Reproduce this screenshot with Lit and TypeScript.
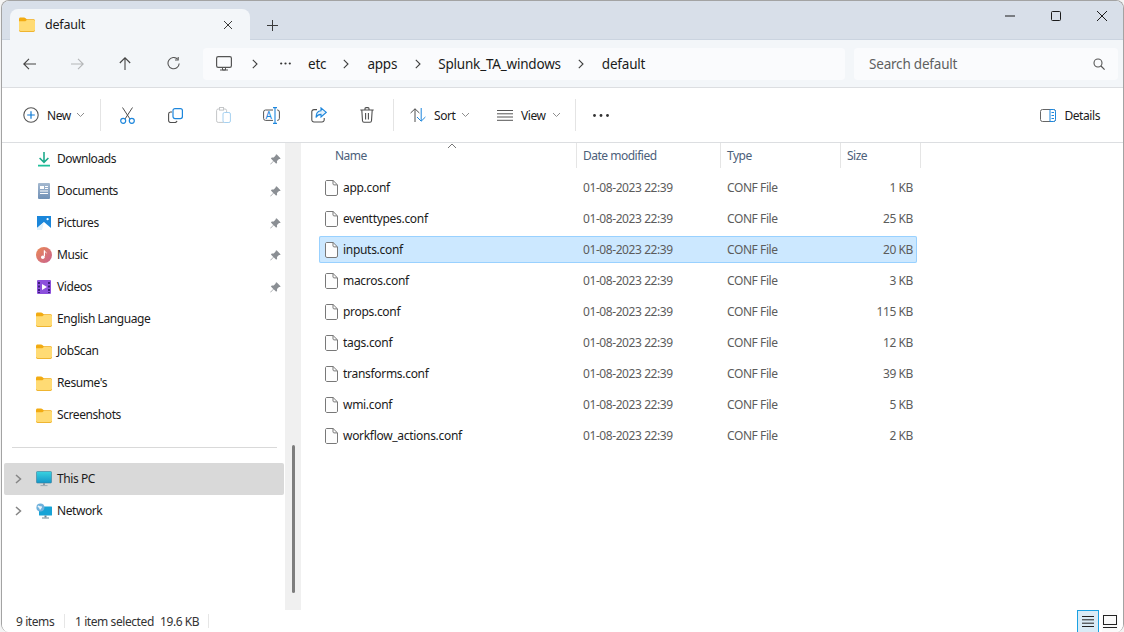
import { LitElement, html, css, svg } from "lit";
import { customElement } from "lit/decorators.js";

const folder = (w = 16, h = 15) => html`<svg class="ic" width=${w} height=${h} viewBox="0 0 16 15">
  <path d="M0 2.2C0 1.2.6.5 1.5.5h3.6c.5 0 .9.2 1.2.5L7.8 2.3H14.5c.9 0 1.5.6 1.5 1.5V6H0z" fill="#f2ab12"/>
  <path d="M0 4.2h6.4l1.4-1.2h6.7c.9 0 1.5.6 1.5 1.4v8.9c0 .9-.6 1.4-1.5 1.4h-13C.6 14.7 0 14.2 0 13.3z" fill="#ffdb74"/>
  <path d="M0 13.3c0 .9.6 1.4 1.5 1.4h13c.9 0 1.5-.5 1.5-1.4v-.5c0 .7-.6 1.2-1.5 1.2h-13C.6 14 0 13.5 0 12.8z" fill="#eaa50f"/>
</svg>`;

const doc = html`<svg class="ic" width="13" height="16" viewBox="0 0 13 16">
  <path d="M1.5.5h6.6l4.4 4.4v9.1c0 .8-.6 1.5-1.4 1.5H1.9c-.8 0-1.4-.7-1.4-1.5V2C.5 1.2.8.5 1.5.5z" fill="#fdfdfd" stroke="#787878"/>
  <path d="M8 .5v3.4c0 .6.5 1 1 1h3.5" fill="none" stroke="#787878"/>
</svg>`;

const pin = html`<svg class="ic" width="11" height="11" viewBox="0 0 11 11">
  <path d="M6.6.3l4.1 4.1-1 .7-.7-.2-2 2 .1 1.9-.9.9-2.5-2.5L.6 10.4l-.3-.3L3.3 6.9.9 4.4l.9-.9 1.9.1 2-2-.2-.7z" fill="#8b8f94"/>
</svg>`;

const chevSmall = html`<svg class="ic" width="9" height="6" viewBox="0 0 9 6"><path d="M1 1l3.5 3.5L8 1" fill="none" stroke="#8e8e8e" stroke-width="1"/></svg>`;
const crumbChev = html`<svg class="ic" width="6" height="10" viewBox="0 0 6 10"><path d="M.8.8L5 5 .8 9.2" fill="none" stroke="#3f3f3f" stroke-width="1.1"/></svg>`;
const treeChev = html`<svg class="ic" width="7" height="10" viewBox="0 0 7 10"><path d="M1 1l4.5 4L1 9" fill="none" stroke="#858585" stroke-width="1.5"/></svg>`;

const sideIcons: Record<string, unknown> = {
  Downloads: html`<svg class="ic" width="16" height="16" viewBox="0 0 16 16"><path d="M8 1v10M3.6 7l4.4 4.4L12.4 7" fill="none" stroke="#1dab8c" stroke-width="1.6"/><path d="M2 14.6h12" stroke="#1fc09a" stroke-width="1.6"/></svg>`,
  Documents: html`<svg class="ic" width="16" height="16" viewBox="0 0 16 16"><defs><linearGradient id="dg" x1="0" y1="0" x2="0" y2="1"><stop offset="0" stop-color="#a5b9d0"/><stop offset="1" stop-color="#6f90b6"/></linearGradient></defs><rect x="2" y="0" width="12" height="16" rx="1" fill="url(#dg)"/><path d="M4 3h4v3H4zM9 3h3v1H9zM9 5h3v1H9zM4 7.5h8v1H4zM4 10h8v1H4z" fill="#fff"/></svg>`,
  Pictures: html`<svg class="ic" width="16" height="16" viewBox="0 0 16 16"><rect x="1" y="1" width="14" height="14" fill="#1a86da"/><path d="M1 13l7-6 7 6v2H1z" fill="#fff"/><path d="M1 13l7-6-2 8H1z" fill="#dff0fb"/><circle cx="11.6" cy="4.2" r="1.1" fill="#fff"/></svg>`,
  Music: html`<svg class="ic" width="16" height="16" viewBox="0 0 16 16"><defs><linearGradient id="mg" x1="0" y1="0" x2="1" y2="1"><stop offset="0" stop-color="#ea8a55"/><stop offset="1" stop-color="#c9618f"/></linearGradient></defs><circle cx="8" cy="8" r="8" fill="url(#mg)"/><path d="M8.4 3.6v6" stroke="#fff" stroke-width="1.2"/><path d="M8.4 3.6c.4 1.4 1.6 1.6 2.2 2.4" stroke="#fff" fill="none"/><circle cx="6.8" cy="10.2" r="1.8" fill="#fff"/></svg>`,
  Videos: html`<svg class="ic" width="16" height="16" viewBox="0 0 16 16"><rect x="1" y="1" width="14" height="14" rx="1" fill="#8c50dc"/><path d="M6 5l5 3-5 3z" fill="#fff"/><path d="M2 3h2v2H2zM2 6.5h2v2H2zM2 10h2v2H2zM2 13h2v1H2zM12 3h2v2h-2zM12 6.5h2v2h-2zM12 10h2v2h-2zM12 13h2v1h-2z" fill="#3b1e78"/></svg>`,
  "This PC": html`<svg class="ic" width="16" height="16" viewBox="0 0 16 16"><defs><linearGradient id="pg" x1="0" y1="0" x2="0" y2="1"><stop offset="0" stop-color="#38d3e0"/><stop offset="1" stop-color="#1596c8"/></linearGradient></defs><rect x=".5" y=".5" width="15" height="11.5" rx=".8" fill="url(#pg)" stroke="#3b7f9c" stroke-width=".6"/><path d="M7 12h2v2H7z" fill="#8a9aa6"/><path d="M4.5 14.6h7" stroke="#9aa8b2" stroke-width="1"/></svg>`,
  Network: html`<svg class="ic" width="16" height="16" viewBox="0 0 16 16"><rect x="3" y="3.5" width="13" height="9" rx=".6" fill="#17a3d6"/><path d="M8.5 12.5h2v2h-2z" fill="#6f8592"/><path d="M6 15h7" stroke="#6f8592"/><circle cx="4.4" cy="4.4" r="4" fill="#6fb1dc"/><path d="M2 2.4c1.4.3 2 1 3 .8s1.4.8.6 1.8-1 2-1.8 1.6-.2-1.6-1-2-1.6-.8-.8-2.2z" fill="#eaf4fa"/></svg>`,
};

const win = [
  ["Downloads", true], ["Documents", true], ["Pictures", true], ["Music", true], ["Videos", true],
  ["English Language", false], ["JobScan", false], ["Resume's", false], ["Screenshots", false],
] as [string, boolean][];

const files = [
  ["app.conf", "1 KB"], ["eventtypes.conf", "25 KB"], ["inputs.conf", "20 KB"], ["macros.conf", "3 KB"],
  ["props.conf", "115 KB"], ["tags.conf", "12 KB"], ["transforms.conf", "39 KB"], ["wmi.conf", "5 KB"],
  ["workflow_actions.conf", "2 KB"],
];

const stroke = (d: string, c = "#4a4a4a", w = 1.2) => svg`<path d=${d} fill="none" stroke=${c} stroke-width=${w}/>`;

@customElement("app-root")
export class AppRoot extends LitElement {
  static styles = css`
    :host { display: block; width: 1124px; height: 632px; background: #f4f4f4; padding-left: 1px; box-sizing: border-box; overflow: hidden;
      font-family: "Noto Sans", "Open Sans", sans-serif; font-size: 12px; color: #1b1b1b; letter-spacing: -0.42px; }
    * { box-sizing: border-box; }
    .ic { display: block; flex: none; }
    .window { width: 1123px; height: 632px; border: 1px solid #a3a3a3; border-width: 1px 1px 0 1px; border-radius: 8px 8px 8px 8px; overflow: hidden; display: flex; flex-direction: column; background: #fff; }

    .title { height: 39px; flex: none; background: #d8dfe9; display: flex; align-items: flex-end; padding-left: 8px; border-bottom: 1px solid #cbd4e0; }
    .tab { width: 240px; height: 31px; margin-bottom: -1px; background: #f3f6f9; border-radius: 8px 8px 0 0; display: flex; align-items: center; padding: 0 17px 0 9px; }
    .tab-label { margin-left: 10px; flex: 1; font-size: 12.5px; padding-bottom: 1px; letter-spacing: -0.2px; }
    .new-tab { margin: 0 0 8px 17px; }
    .winbtns { margin-left: auto; margin-right: -2px; align-self: flex-start; display: flex; height: 30px; align-items: center; }
    .wb { width: 46px; display: flex; justify-content: center; }

    .nav { flex: none; background: #f3f6f9; border-bottom: 1px solid #dcdee1; display: flex; align-items: center; padding-left: 3px; padding-right: 4px; height: 48px; }
    .navbtn { width: 48px; display: flex; justify-content: center; }
    .addr { margin-left: 6px; width: 642px; height: 32px; background: #fafbfd; border-radius: 4px; display: flex; align-items: center; padding-left: 13px; font-size: 13.5px; letter-spacing: -0.2px; }
    .addr .c1 { margin-left: 20px; }
    .addr .dots { margin-left: 22px; }
    .addr .t1 { margin-left: 17px; }
    .addr .c2 { margin-left: 17px; }
    .addr .t2 { margin-left: 18px; }
    .addr .c2b { margin-left: 18px; }
    .addr .t3 { margin-left: 17px; }
    .addr .c3 { margin-left: 17px; }
    .addr .t4 { margin-left: 18px; }
    .search { margin-left: 9px; width: 264px; height: 32px; background: #fafbfd; border-radius: 4px; display: flex; align-items: center; justify-content: space-between; padding: 0 13px 0 15px; color: #5f5f5f; font-size: 13.5px; letter-spacing: -0.2px; }

    .toolbar { height: 55px; flex: none; border-bottom: 1px solid #dcdee1; display: flex; align-items: center; padding-left: 11px; background: #fff; }
    .sep { width: 1px; height: 32px; background: #e4e4e4; flex: none; }
    .ib { width: 48px; display: flex; justify-content: center; flex: none; }
    .ib.first { margin-left: 2px; }
    .sep.s2 { margin-left: 2px; }
    .sep.s3 { margin-left: 14px; }
    .tb { display: flex; align-items: center; flex: none; }
    .new { width: 87px; padding-left: 10px; }
    .new span { margin: 0 6px 0 8px; width: 23px; }
    .sort { margin-left: 16px; }
    .sort span { margin: 0 6px 0 8px; width: 21px; }
    .view { margin-left: 27px; }
    .view span { margin: 0 6px 0 8px; width: 25px; }
    .more { margin-left: 17px; }
    .details { margin-left: auto; padding-right: 23px; }
    .details span { margin-left: 8px; }

    .body { flex: 1; min-height: 0; display: flex; }
    .side { width: 283px; flex: none; padding-top: 0; }
    .row { height: 32px; margin: 0 1px 0 2px; display: flex; align-items: center; padding-right: 3px; }
    .slot { width: 32px; display: flex; justify-content: center; flex: none; padding-right: 4px; }
    .row .lbl { margin-left: 5px; flex: 1; padding-bottom: 1px; }
    .divider { height: 1px; background: #d9d9d9; margin: 16px 8px 15px 10px; }
    .row.active { background: #d9d9d9; border-radius: 2px; }
    .scroll { width: 16px; flex: none; background: #f0f0f0; display: flex; justify-content: center; padding-top: 302px; }
    .thumb { width: 3px; height: 148px; background: #7d7d7d; border-radius: 2px; }

    .main { flex: 1; min-width: 0; padding-left: 1px; }
    .head { height: 25px; display: flex; margin-left: 27px; color: #4c607a; position: relative; letter-spacing: -0.5px; }
    .col { border-right: 1px solid #e5e5e5; padding: 4px 0 0 6px; }
    .col.a { width: 248px; } .col.b { width: 144px; } .col.c { width: 120px; } .col.d { width: 80px; }
    .caret { position: absolute; left: 118px; top: 0; }
    .files { margin: 6px 0 0 17px; width: 598px; display: flex; flex-direction: column; gap: 4px; }
    .file { height: 27px; display: grid; grid-template-columns: 264px 144px 120px 66px; align-items: center; padding-right: 4px; color: #5c5c5c; border-radius: 2px; }
    .file.sel { background: #cce8ff; box-shadow: inset 0 0 0 1px #99d1ff; }
    .nm { display: flex; align-items: center; padding-left: 6px; color: #1b1b1b; letter-spacing: -0.3px; }
    .nm span { margin-left: 5px; }
    .sz { text-align: right; }

    .status { height: 22px; flex: none; display: flex; align-items: center; color: #333; padding-left: 14px; background: #fff; }
    .vsep { width: 1px; height: 14px; background: #e6e6e6; flex: none; }
    .st1 { width: 48px; }
    .st2 { width: 85px; margin-left: 10px; }
    .st3 { width: 48px; }
    .vbtns { margin-left: auto; display: flex; align-self: stretch; padding-right: 5px; }
    .vb1 { width: 22px; background: #d9ebf6; border: 1px solid #1ba1e2; border-width: 1px 1px 0; display: flex; justify-content: center; align-items: center; }
    .vb2 { width: 16px; margin-left: 3px; background: #fafafa; display: flex; justify-content: center; align-items: center; }
  `;

  render() {
    return html`<div class="window">
      <div class="title">
        <div class="tab">
          ${folder()}
          <span class="tab-label">default</span>
          <svg class="ic" width="10" height="10" viewBox="0 0 10 10">${stroke("M1 1l8 8M9 1l-8 8", "#3a3a3a", 1)}</svg>
        </div>
        <svg class="ic new-tab" width="11" height="11" viewBox="0 0 11 11">${stroke("M5.5 0v11M0 5.5h11", "#3a3a3a", 1)}</svg>
        <div class="winbtns">
          <div class="wb"><svg class="ic" width="10" height="2" viewBox="0 0 10 2">${stroke("M0 1h10", "#1b1b1b", 1)}</svg></div>
          <div class="wb"><svg class="ic" width="10" height="10" viewBox="0 0 10 10"><rect x=".5" y=".5" width="9" height="9" rx="1" fill="none" stroke="#1b1b1b"/></svg></div>
          <div class="wb"><svg class="ic" width="10" height="10" viewBox="0 0 10 10">${stroke("M0 0l10 10M10 0L0 10", "#1b1b1b", 1)}</svg></div>
        </div>
      </div>

      <div class="nav">
        <div class="navbtn"><svg class="ic" width="13" height="12" viewBox="0 0 13 12">${stroke("M13 6H.8M6 .8L.8 6 6 11.2", "#444", 1.1)}</svg></div>
        <div class="navbtn"><svg class="ic" width="13" height="12" viewBox="0 0 13 12">${stroke("M0 6h12.2M7 .8L12.2 6 7 11.2", "#b4b6b8", 1.1)}</svg></div>
        <div class="navbtn"><svg class="ic" width="12" height="13" viewBox="0 0 12 13">${stroke("M6 13V.8M.8 6L6 .8 11.2 6", "#444", 1.1)}</svg></div>
        <div class="navbtn"><svg class="ic" width="13" height="13" viewBox="0 0 13 13">${stroke("M10.6 2.2A5.6 5.6 0 1 0 12.2 6.5", "#555", 1.1)}${stroke("M11.2 0v3H8", "#555", 1.1)}</svg></div>
        <div class="addr">
          <svg class="ic" width="16" height="15" viewBox="0 0 16 15"><rect x=".6" y=".6" width="14.8" height="10.8" rx="1.6" fill="none" stroke="#555" stroke-width="1.2"/><path d="M6.5 11.5h3V14h-3zM4 14h8" fill="none" stroke="#555"/></svg>
          <span class="c1">${crumbChev}</span>
          <svg class="ic dots" width="11" height="3" viewBox="0 0 11 3"><circle cx="1.2" cy="1.5" r="1.1" fill="#333"/><circle cx="5.5" cy="1.5" r="1.1" fill="#333"/><circle cx="9.8" cy="1.5" r="1.1" fill="#333"/></svg>
          <span class="t1">etc</span>
          <span class="c2">${crumbChev}</span>
          <span class="t2">apps</span>
          <span class="c2b">${crumbChev}</span>
          <span class="t3">Splunk_TA_windows</span>
          <span class="c3">${crumbChev}</span>
          <span class="t4">default</span>
        </div>
        <div class="search">
          <span>Search default</span>
          <svg class="ic" width="12" height="12" viewBox="0 0 12 12"><circle cx="5" cy="5" r="4" fill="none" stroke="#555" stroke-width="1.1"/>${stroke("M8 8l3.6 3.6", "#555", 1.2)}</svg>
        </div>
      </div>

      <div class="toolbar">
        <div class="tb new">
          <svg class="ic" width="16" height="16" viewBox="0 0 16 16"><circle cx="8" cy="8" r="7.2" fill="none" stroke="#555" stroke-width="1.1"/>${stroke("M8 4.2v7.6M4.2 8h7.6", "#0f7bd6", 1.2)}</svg>
          <span>New</span>${chevSmall}
        </div>
        <div class="sep"></div>
        <div class="ib first"><svg class="ic" width="15" height="17" viewBox="0 0 15 17">${stroke("M2.5 .5L10 12M12.5 .5L5 12", "#4f4f4f", 1)}<circle cx="3.2" cy="13.8" r="2.5" fill="none" stroke="#1d86dc" stroke-width="1.2"/><circle cx="11.8" cy="13.8" r="2.5" fill="none" stroke="#1d86dc" stroke-width="1.2"/></svg></div>
        <div class="ib"><svg class="ic" width="15" height="15" viewBox="0 0 15 15">${stroke("M4 4H2.5A2 2 0 0 0 .6 6v6.5a2 2 0 0 0 2 2H7a2 2 0 0 0 2-1.6", "#4f4f4f", 1.1)}<rect x="5" y=".6" width="9.4" height="10" rx="2" fill="#fff" stroke="#1d86dc" stroke-width="1.2"/></svg></div>
        <div class="ib"><svg class="ic" width="15" height="16" viewBox="0 0 15 16"><rect x=".6" y="2" width="10" height="13.4" rx="1.6" fill="none" stroke="#c4c6c8"/><rect x="3.5" y=".5" width="4" height="2.6" fill="#fff" stroke="#c4c6c8"/><rect x="7" y="5.5" width="7.4" height="10" rx="1.5" fill="#fff" stroke="#a5d0f0"/></svg></div>
        <div class="ib"><svg class="ic" width="17" height="17" viewBox="0 0 17 17">
          <rect x=".6" y="3" width="15.8" height="10.4" rx="2" fill="none" stroke="#555"/>
          <rect x="10" y="0" width="4" height="17" fill="#fff"/>
          <text x="2.4" y="12" font-size="10" font-family="Noto Sans" fill="#1d86dc">A</text>
          ${stroke("M12 1v15M10 .6h4M10 16.4h4", "#1d86dc", 1.1)}
        </svg></div>
        <div class="ib"><svg class="ic" width="16" height="16" viewBox="0 0 16 16">${stroke("M6 2.6H3a2.2 2.2 0 0 0-2.2 2.2v8a2.2 2.2 0 0 0 2.2 2.2h8a2.2 2.2 0 0 0 2.2-2.2V11", "#4f4f4f", 1.1)}<path d="M10 .8l5.2 4.6L10 10V7.4c-2.6 0-4 1-5 3 0-4 1.8-6.4 5-6.6z" fill="#e4f1fb" stroke="#1d86dc" stroke-width="1.1"/></svg></div>
        <div class="ib"><svg class="ic" width="14" height="16" viewBox="0 0 14 16">${stroke("M.3 3h13.4M5 3V1.8C5 1 5.4.6 6 .6h2c.6 0 1 .4 1 1.2V3M1.8 3l.7 10.8c.1.9.7 1.5 1.5 1.5h6c.8 0 1.4-.6 1.5-1.5L12.2 3M5.6 6v6.4M8.4 6v6.4", "#4f4f4f", 1.1)}</svg></div>
        <div class="sep s2"></div>
        <div class="tb sort">
          <svg class="ic" width="16" height="14" viewBox="0 0 16 14">${stroke("M5 14V.8M.6 5L5 .8 9.4 5", "#4f4f4f", 1)}${stroke("M11.2 0v13M7 9l4.2 4.2L15.4 9", "#1d86dc", 1)}</svg>
          <span>Sort</span>${chevSmall}
        </div>
        <div class="tb view">
          <svg class="ic" width="16" height="11" viewBox="0 0 16 11">${stroke("M0 .5h16M0 3.8h16M0 7h16M0 10.3h16", "#555", 1)}</svg>
          <span>View</span>${chevSmall}
        </div>
        <div class="sep s3"></div>
        <svg class="ic more" width="16" height="3" viewBox="0 0 16 3"><circle cx="1.5" cy="1.5" r="1.4" fill="#333"/><circle cx="8" cy="1.5" r="1.4" fill="#333"/><circle cx="14.5" cy="1.5" r="1.4" fill="#333"/></svg>
        <div class="tb details">
          <svg class="ic" width="16" height="13" viewBox="0 0 16 13"><rect x=".5" y=".5" width="15" height="12" rx="2" fill="none" stroke="#666"/><path d="M10 .5h3.5a2 2 0 0 1 2 2v8a2 2 0 0 1-2 2H10z" fill="#fff" stroke="#1d86dc"/><path d="M11.5 3.5h2.5M11.5 6.5h2.5M11.5 9.5h2.5" stroke="#1d86dc"/></svg>
          <span>Details</span>
        </div>
      </div>

      <div class="body">
        <div class="side">
          ${win.map(([n, pinned]) => html`<div class="row">
            <span class="slot"></span>
            ${sideIcons[n] ?? folder()}
            <span class="lbl">${n}</span>
            ${pinned ? pin : ""}
          </div>`)}
          <div class="divider"></div>
          <div class="row active"><span class="slot">${treeChev}</span>${sideIcons["This PC"]}<span class="lbl">This PC</span></div>
          <div class="row"><span class="slot">${treeChev}</span>${sideIcons["Network"]}<span class="lbl">Network</span></div>
        </div>
        <div class="scroll"><div class="thumb"></div></div>
        <div class="main">
          <div class="head">
            <div class="col a">Name</div>
            <div class="col b">Date modified</div>
            <div class="col c">Type</div>
            <div class="col d">Size</div>
            <svg class="ic caret" width="10" height="6" viewBox="0 0 10 6">${stroke("M1 5l4-4 4 4", "#777", 1)}</svg>
          </div>
          <div class="files">
            ${files.map(([n, s]) => html`<div class="file ${n === "inputs.conf" ? "sel" : ""}">
              <div class="nm">${doc}<span>${n}</span></div>
              <div>01-08-2023 22:39</div>
              <div>CONF File</div>
              <div class="sz">${s}</div>
            </div>`)}
          </div>
        </div>
      </div>

      <div class="status">
        <span class="st1">9 items</span>
        <div class="vsep"></div>
        <span class="st2">1 item selected</span>
        <span class="st3">19.6 KB</span>
        <div class="vsep"></div>
        <div class="vbtns">
          <div class="vb1"><svg class="ic" width="12" height="11" viewBox="0 0 12 11">${stroke("M0 .5h12M0 3.8h12M0 7.2h12M0 10.5h12", "#222", 1)}</svg></div>
          <div class="vb2"><svg class="ic" width="14" height="13" viewBox="0 0 14 13"><rect x=".5" y=".5" width="13" height="9" fill="none" stroke="#222"/><path d="M0 12.5h14" stroke="#222"/></svg></div>
        </div>
      </div>
    </div>`;
  }
}
